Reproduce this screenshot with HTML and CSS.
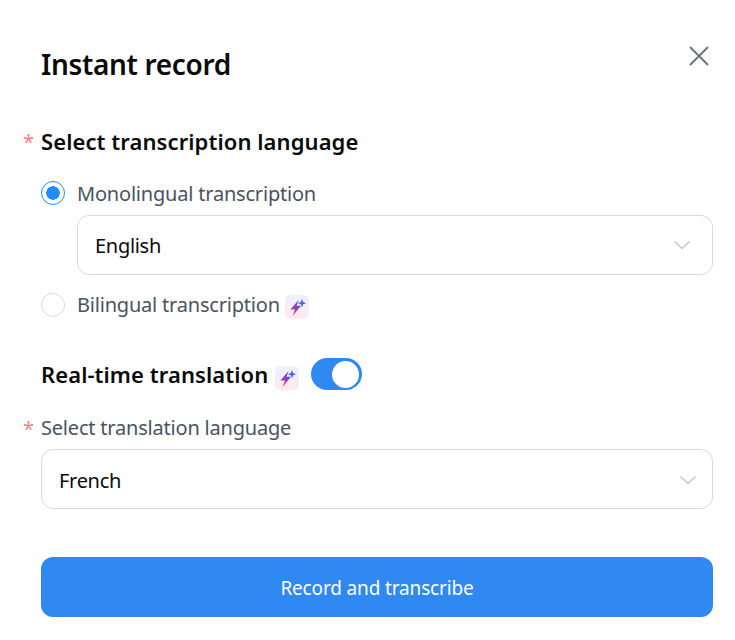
FILE: index.html
```html
<!DOCTYPE html>
<html lang="en">
<head>
    <meta charset="UTF-8">
    <meta name="viewport" content="width=device-width, initial-scale=1.0">
    <title>Instant record</title>
    <link rel="stylesheet" href="styles.css">
</head>
<body>

<svg class="svg-defs" width="0" height="0" aria-hidden="true">
    <defs>
        <linearGradient id="boltFill" x1="0.7" y1="0" x2="0.3" y2="1">
            <stop offset="0" stop-color="#4a50ec"/>
            <stop offset="0.5" stop-color="#8f40bc"/>
            <stop offset="0.85" stop-color="#f0355f"/>
        </linearGradient>
        <symbol id="sparkBolt" viewBox="0 0 24 24">
            <path d="M13.6 5 L5.4 14.4 L10 14.4 L7.6 21 L16 10.8 L11.6 10.8 Z" fill="url(#boltFill)"/>
            <path d="M17 4 L18.1 7.1 L21.2 8.2 L18.1 9.3 L17 12.4 L15.9 9.3 L12.8 8.2 L15.9 7.1 Z" fill="#4a62f0"/>
        </symbol>
    </defs>
</svg>

<main class="dialog">
    <header class="dialog-head">
        <h1>Instant record</h1>
        <button class="close-button" aria-label="Close">
            <svg width="20" height="20" viewBox="0 0 20 20"><path d="M1.5 1.5 L18.5 18.5 M18.5 1.5 L1.5 18.5" stroke="#6b7683" stroke-width="2" stroke-linecap="round" fill="none"/></svg>
        </button>
    </header>

    <section class="field-group">
        <h2 class="group-title required">Select transcription language</h2>

        <div class="radio-row">
            <span class="radio radio-on"></span>
            <span class="radio-label">Monolingual transcription</span>
        </div>
        <div class="select select-nested">
            <span>English</span>
            <svg class="chevron" width="18" height="10" viewBox="0 0 18 10"><path d="M1.5 1.5 L9 8.5 L16.5 1.5" stroke="#c6c9ce" stroke-width="1.6" fill="none"/></svg>
        </div>
        <div class="radio-row radio-row-second">
            <span class="radio"></span>
            <span class="radio-label">Bilingual transcription</span>
            <span class="ai-badge"><svg width="24" height="24"><use href="#sparkBolt"/></svg></span>
        </div>
    </section>

    <section class="field-group translation">
        <div class="toggle-row">
            <h2 class="group-title">Real-time translation</h2>
            <span class="ai-badge"><svg width="24" height="24"><use href="#sparkBolt"/></svg></span>
            <span class="toggle"><span class="toggle-knob"></span></span>
        </div>
        <label class="field-label required">Select translation language</label>
        <div class="select select-plain">
            <span>French</span>
            <svg class="chevron" width="18" height="10" viewBox="0 0 18 10"><path d="M1.5 1.5 L9 8.5 L16.5 1.5" stroke="#c6c9ce" stroke-width="1.6" fill="none"/></svg>
        </div>
    </section>

    <button class="record-button">Record and transcribe</button>
</main>

</body>
</html>
```

FILE: styles.css
```css
body {
    font-family: "Noto Sans", "Open Sans", Arial, sans-serif;
    margin: 0;
    padding: 0;
    background-color: #fff;
    color: #0a0b0d;
}
.svg-defs {
    display: block;
    height: 0;
}
.dialog {
    padding: 43px 22px 0 41px;
}
.dialog-head {
    display: flex;
    justify-content: space-between;
    align-items: flex-start;
    height: 42px;
}
h1 {
    margin: 0;
    font-size: 28px;
    line-height: 42px;
    font-weight: 600;
    letter-spacing: -0.35px;
}
.close-button {
    border: none;
    background: none;
    padding: 0;
    margin: 3px 4px 0 0;
    height: 20px;
    cursor: pointer;
}
.field-group {
    margin-top: 40px;
}
.group-title {
    margin: 0;
    font-size: 22px;
    line-height: 32px;
    font-weight: 600;
    letter-spacing: 0.08px;
}
.required {
    position: relative;
}
.required::before {
    content: "*";
    position: absolute;
    left: -18px;
    top: 1px;
    color: #f67f85;
    font-size: 20px;
    font-weight: 400;
}
.radio-row {
    display: flex;
    align-items: center;
    height: 32px;
    margin-top: 20px;
}
.radio-row-second {
    margin-top: 14px;
}
.radio-row-second .radio-label {
    margin-bottom: 2px;
}
.radio-row-second .ai-badge {
    margin-top: 4px;
}
.radio {
    width: 24px;
    height: 24px;
    box-sizing: border-box;
    border: 1px solid #d9d9d9;
    border-radius: 50%;
    margin-right: 12px;
    flex-shrink: 0;
}
.radio-on {
    border-color: #1f8cff;
    background: radial-gradient(circle, #1f8cff 0 6.5px, #fff 7px);
}
.radio-label {
    font-size: 20px;
    color: #4a5361;
    letter-spacing: -0.2px;
}
.select {
    display: flex;
    justify-content: space-between;
    align-items: center;
    height: 60px;
    box-sizing: border-box;
    border: 1px solid #d9d9d9;
    border-radius: 12px;
    padding: 0 21px 0 17px;
    font-size: 20px;
    letter-spacing: -0.3px;
}
.select-nested {
    margin: 6px 0 0 36px;
}
.select-plain {
    padding: 2px 15px 0 17px;
}
.ai-badge {
    width: 24px;
    height: 24px;
    border-radius: 5px;
    background: linear-gradient(to bottom, #edf1ff, #ffe9f1);
    margin-left: 5px;
    flex-shrink: 0;
}
.ai-badge svg {
    display: block;
}
.translation {
    margin-top: 37px;
}
.toggle-row {
    display: flex;
    align-items: center;
    height: 32px;
}
.toggle-row .ai-badge {
    margin: 8px 0 0 7px;
}
.toggle {
    width: 51px;
    height: 32px;
    border-radius: 16px;
    background-color: #3088f2;
    margin-left: 12px;
    display: flex;
    justify-content: flex-end;
    align-items: center;
    padding-right: 3px;
    box-sizing: border-box;
}
.toggle-knob {
    width: 27px;
    height: 27px;
    border-radius: 50%;
    background: #fff;
}
.field-label {
    display: block;
    font-size: 20px;
    line-height: 32px;
    color: #4a5361;
    letter-spacing: -0.2px;
    margin-top: 22px;
    margin-bottom: 5px;
}
.record-button {
    display: block;
    width: 100%;
    height: 60px;
    margin-top: 48px;
    padding: 2px 0 0;
    border: none;
    border-radius: 12px;
    background-color: #3088f2;
    color: #fff;
    font-family: inherit;
    font-size: 19px;
    letter-spacing: -0.15px;
    cursor: pointer;
}
```
